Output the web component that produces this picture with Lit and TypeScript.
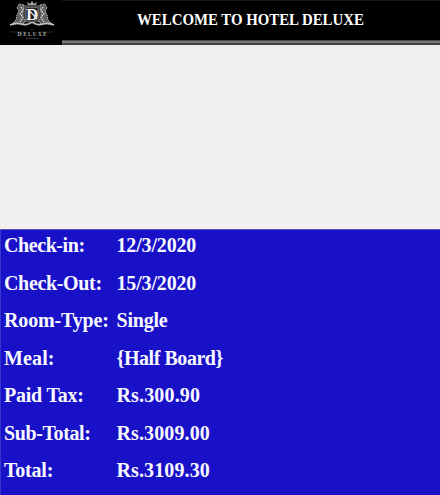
import { LitElement, html, css } from "lit";
import { customElement } from "lit/decorators.js";

interface Cell { text: string; tracking: number; }
const cell = (text: string, tracking: number): Cell => ({ text, tracking });

const ROWS: [Cell, Cell][] = [
  [cell("Check-in:", -0.42), cell("12/3/2020", -0.16)],
  [cell("Check-Out:", -0.34), cell("15/3/2020", -0.16)],
  [cell("Room-Type:", -0.15), cell("Single", -0.2)],
  [cell("Meal:", 0.14), cell("{Half Board}", -0.45)],
  [cell("Paid Tax:", -0.22), cell("Rs.300.90", 0.16)],
  [cell("Sub-Total:", -0.4), cell("Rs.3009.00", 0.12)],
  [cell("Total:", -0.2), cell("Rs.3109.30", 0.12)],
];

@customElement("hotel-logo")
class HotelLogo extends LitElement {
  static styles = css`
    :host { display: block; width: 62px; height: 45px; background: #000; }
    svg { display: block; }
    .name { font: bold 6px "Liberation Serif", serif; fill: #aaa; }
    .initial { font: bold 17px "Liberation Serif", serif; fill: #f4f4f4; }
  `;
  render() {
    return html`<svg width="62" height="45" viewBox="0 0 62 45">
      <path d="M23 5h18l5 5-2 10-12 4-12-4-2-10z" fill="#464646" />
      <g fill="#606060" stroke="#a8a8a8" stroke-width="1">
        <path d="M24 5l-5-1-2 4 2 3-2 4-1 5-5 5 6-1 6 0 3-3-4-4z" stroke-dasharray="2 .8" />
        <path d="M40 5l5-1 2 4-2 3 2 4 1 5 5 5-6-1-6 0-3-3 4-4z" stroke-dasharray="2 .8" />
      </g>
      <path d="M21 7l2 3-3 4 3 3-3 5M43 7l-2 3 3 4-3 3 3 5" fill="none" stroke="#ddd" stroke-width="1.2" stroke-dasharray="1.6 .9" />
      <path d="M10 25q6-3 11-1 6 2 11-2 5 4 11 2 6-2 11 1" fill="none" stroke="#c0c0c0" stroke-width="1.6" />
      <path d="M26 7q6 2 12 0v10q-2 4-6 5-4-1-6-5z" fill="#151515" stroke="#858585" stroke-width=".8" />
      <path d="M28 5l-1-3 3 2 2-3 2 3 3-2-1 3z" fill="#aaa" />
      <text class="initial" x="26" y="20">D</text>
      <path d="M28 9l9 10" fill="none" stroke="#ddd" stroke-width="1.2" />
      <path d="M30 29.8h4M10 32h15M39 32h14" stroke="#444" stroke-width=".6" />
      <path d="M26 38.3h12" stroke="#666" stroke-dasharray="1 .6" />
      <text class="name" x="17.5" y="35.6" textLength="29" lengthAdjust="spacing">D<tspan font-size="5.2">ELUXE</tspan></text>
    </svg>`;
  }
}

@customElement("app-root")
class AppRoot extends LitElement {
  static styles = css`
    :host {
      display: flex; flex-direction: column; width: 440px; height: 495px;
      overflow: hidden; background: #f0f0f0; color: #fff;
      font-family: "Liberation Serif", serif; font-weight: bold;
    }
    header { display: flex; height: 45px; flex: none; }
    .banner {
      flex: 1; box-sizing: border-box; height: 45px; padding: 10px 0 0 74.5px;
      background: linear-gradient(#181818 0 1px, #000 1px 40px, #4c4c4c 40px 41px, #777 41px 43px, #414141 43px 45px);
    }
    h1 {
      margin: 0; font-size: 16.5px; line-height: 20px; white-space: nowrap;
      width: max-content; transform: scaleX(.9); transform-origin: left;
    }
    .space { height: 184px; flex: none; }
    .details {
      flex: 1; box-sizing: border-box; margin: 0; padding: 0 0 0 4px;
      background: #1811c8; box-shadow: inset 0 1px #5552bd, inset 1px 0 #3735cf;
      display: grid; grid-template-columns: 112.5px 1fr; grid-auto-rows: 37.5px;
      font-size: 20px; line-height: 33px; white-space: nowrap; color: #f8f8ff;
    }
    dt, dd { margin: 0; }
  `;
  render() {
    return html`
      <header><hotel-logo></hotel-logo><div class="banner"><h1>WELCOME TO HOTEL DELUXE</h1></div></header>
      <div class="space"></div>
      <dl class="details">${ROWS.map(([k, v]) => html`
        <dt style="letter-spacing:${k.tracking}px">${k.text}</dt>
        <dd style="letter-spacing:${v.tracking}px">${v.text}</dd>`)}</dl>
    `;
  }
}
